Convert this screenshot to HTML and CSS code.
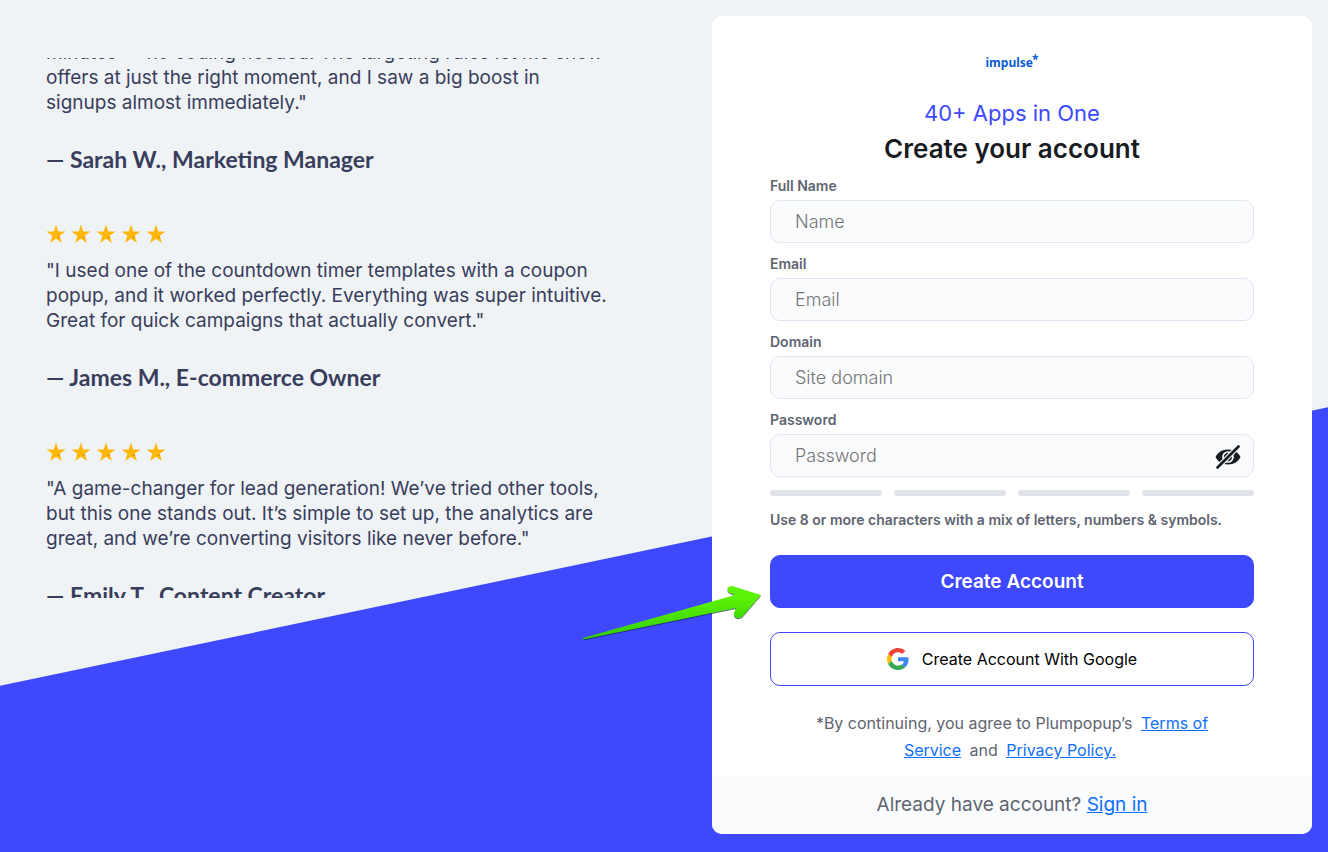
FILE: index.html
```html
<!DOCTYPE html>
<html lang="en">
<head>
  <meta charset="UTF-8">
  <meta name="viewport" content="width=device-width, initial-scale=1">
  <title>Create your account</title>
  <link rel="stylesheet" href="styles.css">
</head>
<body>
  <svg class="sprite" aria-hidden="true">
    <symbol id="star" viewBox="0 0 20 20">
      <path fill="#ffb70b" d="M10 0.5l2.3 7h7.2l-5.8 4.3 2.2 7.2L10 14.7 4.1 19l2.2-7.2L0.5 7.500h7.200z"/>
      <path fill="#c98a12" d="M10.500 13.800l3.200-1.600.5 1.600-1.600-.3z"/>
    </symbol>
  </svg>

  <div class="backdrop"></div>

  <main class="page">
    <section class="reviews">
      <div class="reviews-track">
        <article class="review">
          <p class="quote">minutes — no coding needed. The targeting rules let me show<br>
            offers at just the right moment, and I saw a big boost in<br>
            signups almost immediately."</p>
          <p class="author">— Sarah W., Marketing Manager</p>
        </article>

        <article class="review">
          <div class="stars" role="img" aria-label="5 stars">
            <svg><use href="#star"/></svg><svg><use href="#star"/></svg><svg><use href="#star"/></svg><svg><use href="#star"/></svg><svg><use href="#star"/></svg>
          </div>
          <p class="quote">"I used one of the countdown timer templates with a coupon<br>
            popup, and it worked perfectly. Everything was super intuitive.<br>
            Great for quick campaigns that actually convert."</p>
          <p class="author">— James M., E-commerce Owner</p>
        </article>

        <article class="review">
          <div class="stars" role="img" aria-label="5 stars">
            <svg><use href="#star"/></svg><svg><use href="#star"/></svg><svg><use href="#star"/></svg><svg><use href="#star"/></svg><svg><use href="#star"/></svg>
          </div>
          <p class="quote">"A game-changer for lead generation! We’ve tried other tools,<br>
            but this one stands out. It’s simple to set up, the analytics are<br>
            great, and we’re converting visitors like never before."</p>
          <p class="author">— Emily T., Content Creator</p>
        </article>
      </div>
    </section>

    <section class="card">
      <div class="card-body">
        <div class="logo">impulse<span class="logo-mark">*</span></div>
        <p class="tagline">40+ Apps in One</p>
        <h1>Create your account</h1>

        <form>
          <div class="field">
            <label for="name">Full Name</label>
            <input type="text" id="name" placeholder="Name">
          </div>
          <div class="field">
            <label for="email">Email</label>
            <input type="email" id="email" placeholder="Email">
          </div>
          <div class="field">
            <label for="domain">Domain</label>
            <input type="text" id="domain" placeholder="Site domain">
          </div>
          <div class="field">
            <label for="password">Password</label>
            <div class="password">
              <input type="password" id="password" placeholder="Password">
              <button type="button" class="toggle" aria-label="Show password">
                <svg viewBox="0 0 26 24">
                  <path fill="#181c22" d="M13 4.500C7 4.500 2.500 7.500 0.500 12c2 4.500 6.500 7.500 12.500 7.500S23.500 16.500 25.500 12C23.500 7.500 19 4.500 13 4.500z"/>
                  <circle cx="13" cy="12" r="5" fill="none" stroke="#fafbfd" stroke-width="1.700"/>
                  <path stroke="#fafbfd" stroke-width="5" d="M3 22L23 2"/>
                  <path stroke="#181c22" stroke-width="2.600" stroke-linecap="round" d="M2.500 22.500L23.500 1.500"/>
                </svg>
              </button>
            </div>
          </div>

          <div class="strength"><span></span><span></span><span></span><span></span></div>
          <p class="hint">Use 8 or more characters with a mix of letters, numbers &amp; symbols.</p>

          <button type="submit" class="btn btn-primary">Create Account</button>
          <button type="button" class="btn btn-google">
            <svg viewBox="0 0 48 48">
              <path fill="#EA4335" d="M24 9.500c3.540 0 6.710 1.220 9.210 3.600l6.850-6.850C35.900 2.380 30.470 0 24 0 14.620 0 6.510 5.380 2.560 13.220l7.980 6.190C12.430 13.720 17.740 9.500 24 9.500z"/>
              <path fill="#4285F4" d="M46.980 24.550c0-1.570-.15-3.090-.38-4.550H24v9.020h12.940c-.58 2.960-2.260 5.480-4.780 7.180l7.730 6c4.510-4.180 7.090-10.360 7.090-17.650z"/>
              <path fill="#FBBC05" d="M10.530 28.590c-.48-1.450-.76-2.990-.76-4.590s.27-3.140.76-4.590l-7.980-6.190C.92 16.460 0 20.120 0 24c0 3.880.92 7.540 2.560 10.780l7.970-6.190z"/>
              <path fill="#34A853" d="M24 48c6.480 0 11.930-2.130 15.890-5.810l-7.730-6c-2.150 1.450-4.920 2.300-8.160 2.300-6.260 0-11.570-4.220-13.470-9.910l-7.980 6.190C6.510 42.620 14.620 48 24 48z"/>
            </svg>
            Create Account With Google
          </button>
        </form>

        <p class="terms">*By continuing, you agree to Plumpopup’s <a href="#">Terms of Service</a> and <a href="#">Privacy Policy.</a></p>
      </div>
      <div class="card-footer">Already have account? <a href="#">Sign in</a></div>

      <svg class="arrow" viewBox="0 0 180 56" aria-hidden="true">
        <defs>
          <linearGradient id="arrowFill" x1="0.450" y1="0.300" x2="0.550" y2="0.850">
            <stop offset="0" stop-color="#5cf205"/>
            <stop offset="1" stop-color="#35cf02"/>
          </linearGradient>
        </defs>
        <path fill="#102040" opacity="0.650" transform="translate(0 1)" d="M0 53V54.500L153 23 151 28C150 33 156 35 160 31L178 10 149 1C144 1 143 6 147 8L152 10z"/>
        <path fill="url(#arrowFill)" d="M0 53V54.500L153 23 151 28C150 33 156 35 160 31L178 10 149 1C144 1 143 6 147 8L152 10z"/>
      </svg>
    </section>
  </main>
</body>
</html>
```
FILE: styles.css
```css
* {
  box-sizing: border-box;
}

body {
  margin: 0;
  min-height: 100vh;
  position: relative;
  background: #eff3f6;
  color: #5e6470;
  font-family: Inter, "Open Sans", sans-serif;
}

p,
h1 {
  margin: 0;
}

a {
  color: #0d6efd;
}

.sprite {
  position: absolute;
  width: 0;
  height: 0;
}

.backdrop {
  position: absolute;
  inset: 0;
  background: #3e49ff;
  clip-path: polygon(0 80.5%, 100% 47.8%, 100% 100%, 0 100%);
}

.page {
  position: relative;
  display: flex;
  justify-content: space-between;
  align-items: flex-start;
  padding: 16px 16px 18px 46px;
}

/* reviews */
.reviews {
  flex: 1;
  height: 540px;
  margin-top: 42px;
  overflow: hidden;
  color: #393d5c;
  white-space: nowrap;
}

.reviews-track {
  margin-top: -18px;
}

.review {
  margin-bottom: 48px;
}

.stars {
  display: flex;
  gap: 5px;
  height: 24px;
  margin-bottom: 12px;
  align-items: center;
}

.stars svg {
  width: 20px;
  height: 20px;
}

.quote {
  font-size: 19px;
  line-height: 25px;
}

.author {
  margin-top: 29px;
  font-family: Lato, sans-serif;
  font-size: 23px;
  font-weight: 700;
  line-height: 30px;
}

/* sign up card */
.card {
  position: relative;
  width: 600px;
  border-radius: 10px;
  background: #fff;
}

.card-body {
  padding: 36px 58px 12px;
}

.logo {
  color: #0b5cd5;
  font-family: "Noto Sans", sans-serif;
  font-size: 12px;
  font-weight: 700;
  line-height: 22px;
  text-align: center;
}

.logo-mark {
  margin-left: -1px;
  font-size: 12px;
  line-height: 12px;
  vertical-align: 3px;
}

.tagline {
  margin-top: 24px;
  color: #3e49ff;
  font-size: 22px;
  line-height: 30px;
  text-align: center;
}

h1 {
  margin: 4px 0 11px;
  color: #181c22;
  font-size: 26px;
  font-weight: 600;
  line-height: 34px;
  text-align: center;
}

.field {
  margin-bottom: 12px;
}

.field label {
  display: block;
  margin-bottom: 5px;
  font-size: 14px;
  font-weight: 600;
  line-height: 18px;
}

.field input {
  display: block;
  width: 100%;
  height: 43px;
  padding: 0 24px;
  border: 1px solid #e1e3f1;
  border-radius: 10px;
  background: #fafbfd;
  color: #181c22;
  font-family: inherit;
  font-size: 18px;
}

.field input::placeholder {
  color: #757575;
  font-weight: 300;
}

.password {
  position: relative;
}

.toggle {
  position: absolute;
  top: 11px;
  right: 13px;
  width: 26px;
  height: 24px;
  padding: 0;
  border: 0;
  background: none;
  cursor: pointer;
}

.toggle svg {
  display: block;
}

.strength {
  display: flex;
  gap: 12px;
  padding-top: 1px;
}

.strength span {
  flex: 1;
  height: 6px;
  border-radius: 3px;
  background: #e1e3ea;
}

.hint {
  margin: 14px 0 25px;
  font-size: 14px;
  font-weight: 600;
  line-height: 20px;
}

.btn {
  display: flex;
  width: 100%;
  height: 53px;
  align-items: center;
  justify-content: center;
  border: 1px solid #3e49ff;
  border-radius: 10px;
  font-family: inherit;
  cursor: pointer;
}

.btn-primary {
  background: #3e49ff;
  color: #fff;
  font-size: 19px;
  font-weight: 600;
}

.btn-google {
  gap: 13px;
  height: 54px;
  margin-top: 24px;
  background: #fff;
  color: #000;
  font-size: 16px;
}

.btn-google svg {
  width: 22px;
  height: 22px;
}

.terms {
  margin: 24px auto 0;
  max-width: 400px;
  font-size: 16px;
  line-height: 27px;
  text-align: center;
}

.terms a {
  margin: 0 4px;
}

.card-footer {
  padding: 14px;
  border-radius: 0 0 10px 10px;
  background: #fafbfd;
  font-size: 19px;
  line-height: 30px;
  text-align: center;
}

/* pointer lying over the page */
.arrow {
  position: absolute;
  top: 569px;
  left: -129px;
  width: 180px;
  height: 56px;
}
```
